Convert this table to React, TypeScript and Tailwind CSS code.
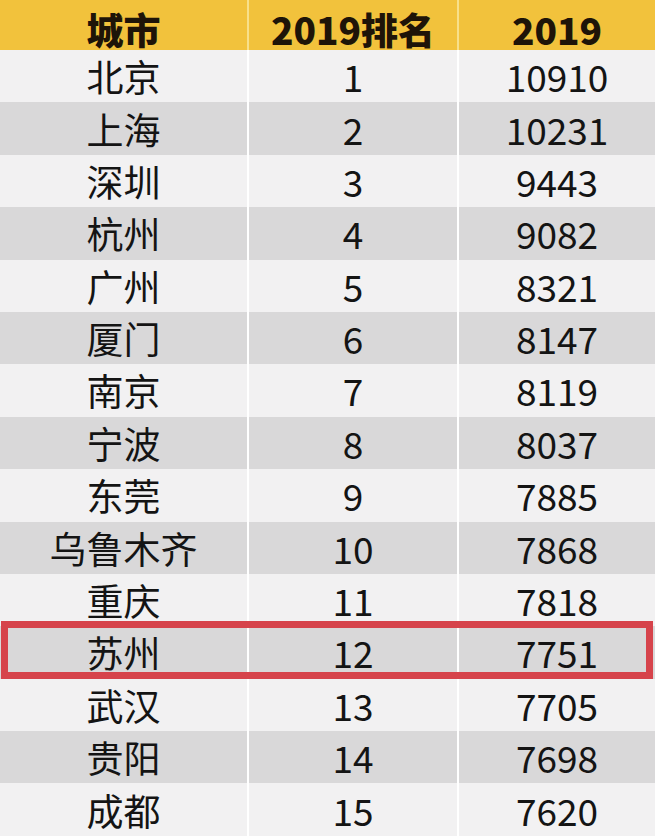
const rows: [string, string, string][] = [
  ["北京", "1", "10910"],
  ["上海", "2", "10231"],
  ["深圳", "3", "9443"],
  ["杭州", "4", "9082"],
  ["广州", "5", "8321"],
  ["厦门", "6", "8147"],
  ["南京", "7", "8119"],
  ["宁波", "8", "8037"],
  ["东莞", "9", "7885"],
  ["乌鲁木齐", "10", "7868"],
  ["重庆", "11", "7818"],
  ["苏州", "12", "7751"],
  ["武汉", "13", "7705"],
  ["贵阳", "14", "7698"],
  ["成都", "15", "7620"],
];

const font = { fontFamily: '"Noto Sans CJK SC", "Noto Sans", sans-serif' };

export default function App() {
  return (
    <div
      className="w-[655px] h-[836px] overflow-hidden bg-white text-[37px] leading-[1.3] text-[#141414]"
      style={font}
    >
      <div className="grid grid-cols-[247px_210px_198px] h-[50px] bg-[#f2c23c] font-black text-[#1e1408]">
        <div className="flex items-center justify-center pt-[5px]">城市</div>
        <div className="flex items-center justify-center pt-[5px] border-l-2 border-[#f8e08a]">2019排名</div>
        <div className="flex items-center justify-center pt-[5px] border-l-2 border-[#f8e08a]">2019</div>
      </div>
      {rows.map(([city, rank, value], i) => {
        const bg = i % 2 === 0 ? "bg-[#f2f1f2]" : "bg-[#d9d8d9]";
        const highlight = city === "苏州";
        return (
          <div
            key={city}
            className={`relative grid grid-cols-[247px_210px_198px] h-[52.4px] ${bg}`}
          >
            <div className="flex items-center justify-center">{city}</div>
            <div className="flex items-center justify-center border-l-2 border-white">{rank}</div>
            <div className="flex items-center justify-center border-l-2 border-white">{value}</div>
            {highlight && (
              <div className="absolute left-[1px] right-[2px] top-[-5px] bottom-0 border-[7px] border-[#d6434b]" />
            )}
          </div>
        );
      })}
    </div>
  );
}
